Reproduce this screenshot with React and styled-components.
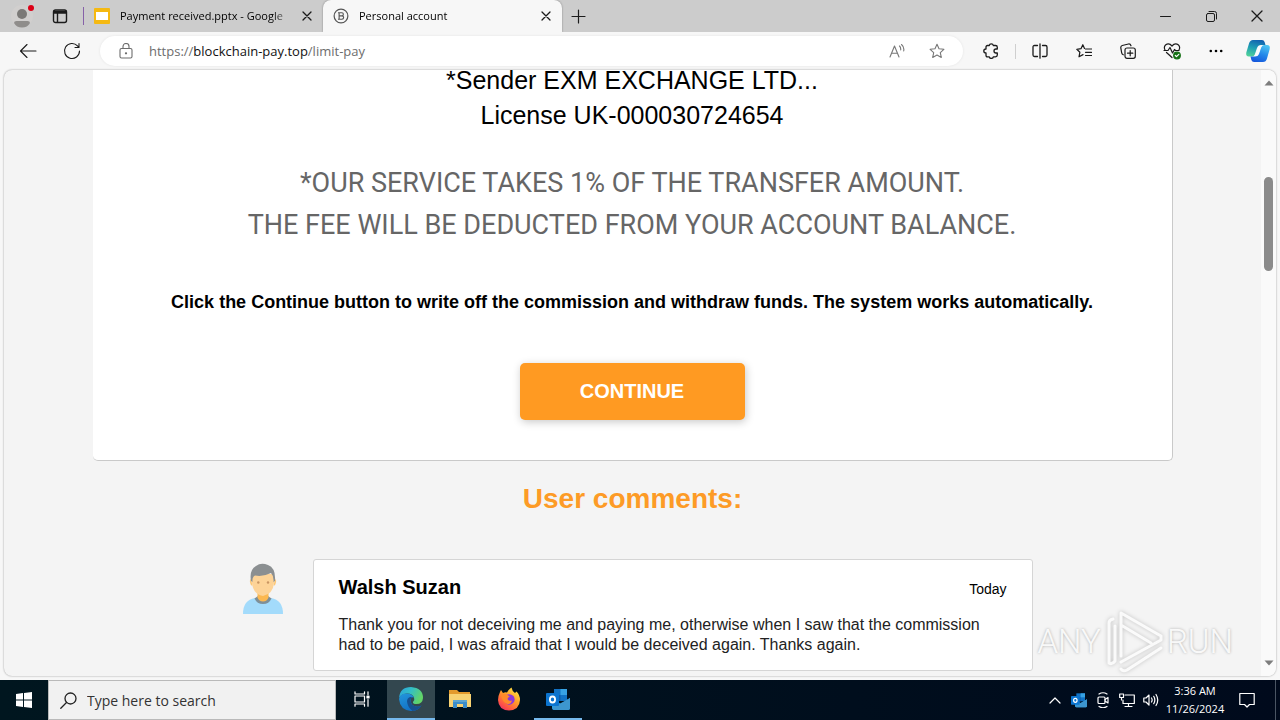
import React from 'react';
import styled, { createGlobalStyle } from 'styled-components';

const GlobalStyle = createGlobalStyle`
    * {
        box-sizing: border-box;
    }
    body {
        margin: 0;
        background-color: #f7f7f7;
        font-family: "Open Sans", "Noto Sans", sans-serif;
    }
    button, input {
        font-family: inherit;
    }
`;

const Screen = styled.div`
    display: flex;
    flex-direction: column;
    height: 100vh;
    overflow: hidden;
`;

const TabStrip = styled.header`
    display: flex;
    flex: none;
    height: 32px;
    background-color: #cccccc;
`;
const IconButton = styled.button`
    display: flex;
    flex: none;
    align-items: center;
    justify-content: center;
    width: ${props => props.$width || 44}px;
    padding: 0;
    border: none;
    background: none;
    color: ${props => props.$color || '#1b1b1b'};
`;
const StripDivider = styled.span`
    width: 1px;
    height: 18px;
    margin: 7px 0 7px 7px;
    background-color: #8661a8;
`;
const Tab = styled.div`
    display: flex;
    align-items: center;
    width: 239px;
    padding: 0 2px 0 10px;
    border-radius: ${props => (props.$active ? '8px 8px 0 0' : '0 0 8px 0')};
    background-color: ${props => (props.$active ? '#f7f7f7' : '#cccccc')};
    box-shadow: ${props => (props.$active ? '0 0 2px rgba(0, 0, 0, .4)' : 'none')};
`;
const TabTitle = styled.span`
    flex: 1;
    margin-left: 10px;
    overflow: hidden;
    font-size: 11px;
    line-height: 16px;
    white-space: nowrap;
    color: #000;
    mask-image: linear-gradient(to right, #000 88%, transparent);
`;
const WindowControls = styled.div`
    display: flex;
    margin-left: auto;
`;

const Toolbar = styled.nav`
    display: flex;
    flex: none;
    align-items: center;
    height: 38px;
    padding: 0 2px 0 6px;
    background-color: #f7f7f7;
`;
const AddressBar = styled.form`
    display: flex;
    flex: 1;
    align-items: center;
    height: 30px;
    margin: 0 6px;
    padding: 0 6px 0 18px;
    border-radius: 15px;
    background-color: #fff;
    box-shadow: 0 0 3px rgba(0, 0, 0, .08);
    color: #6d6d6d;
`;
const Address = styled.a`
    flex: 1;
    margin-left: 15px;
    font-size: 13px;
    line-height: 18px;
    text-decoration: none;
    color: #6d6d6d;
    b {
        font-weight: 400;
        color: #111;
    }
`;
const ToolDivider = styled.span`
    width: 1px;
    height: 15px;
    margin: 0 2px;
    background-color: #cfcfcf;
`;

const Frame = styled.div`
    display: flex;
    flex: 1;
    min-height: 0;
    margin: 0 4px 4px;
    overflow: hidden;
    border-radius: 8px;
    background-color: #f4f4f4;
    box-shadow: 0 0 2px rgba(0, 0, 0, .4);
`;
const Page = styled.main`
    flex: 1;
    overflow: hidden;
    font-family: "Liberation Sans", Arial, sans-serif;
    color: #000;
`;
const ScrollBar = styled.div`
    display: flex;
    flex-direction: column;
    align-items: center;
    width: 15px;
    padding: 10px 0;
    background-color: #fafafa;
    color: #7d7d7d;
`;
const Thumb = styled.div`
    width: 9px;
    height: 94px;
    margin: 91px 0 auto;
    border-radius: 5px;
    background-color: #8b8b8b;
`;

const PaymentCard = styled.section`
    display: flex;
    flex-direction: column;
    align-items: center;
    max-width: 1080px;
    margin: 0 auto;
    padding-bottom: 40px;
    border-right: 1px solid #c9c9c9;
    border-bottom: 1px solid #c9c9c9;
    border-radius: 0 0 5px 5px;
    background-color: #fff;
    text-align: center;
`;
const Sender = styled.p`
    margin: -7px 0 0;
    font-size: 25px;
    line-height: 35px;
`;
const FeeNote = styled.p`
    margin: 29px 0 44px;
    font-family: Roboto, "Open Sans", sans-serif;
    font-size: 27px;
    line-height: 42px;
    color: #666;
`;
const Hint = styled.p`
    margin: 0 0 48px;
    font-size: 18px;
    font-weight: 700;
    line-height: 25px;
`;
const ContinueButton = styled.button`
    width: 225px;
    height: 57px;
    border: none;
    border-radius: 5px;
    background-color: #ff9a22;
    box-shadow: 1px 2px 8px rgba(0, 0, 0, .22);
    font-size: 20px;
    font-weight: 700;
    color: #fff;
`;
const CommentsTitle = styled.h2`
    margin: 21px 0 43px;
    font-size: 28px;
    line-height: 34px;
    text-align: center;
    color: #fd9b26;
`;
const Comment = styled.article`
    display: flex;
    gap: 20px;
    max-width: 800px;
    margin: 0 auto;
`;
const AvatarBox = styled.div`
    display: flex;
    justify-content: center;
    width: 60px;
    padding-top: 4px;
`;
const CommentBody = styled.div`
    flex: 1;
    padding: 15px 25px;
    border: 1px solid #d5d5d5;
    border-radius: 3px;
    background-color: #fff;
`;
const CommentHead = styled.div`
    display: flex;
    align-items: baseline;
    justify-content: space-between;
    margin-bottom: 14px;
    font-size: 14px;
    line-height: 24px;
    h3 {
        margin: 0;
        font-size: 20px;
    }
`;
const CommentText = styled.p`
    margin: 0;
    font-size: 16px;
    line-height: 20px;
    color: #222;
`;

const Watermark = styled.div`
    position: absolute;
    right: 47px;
    bottom: 46px;
    display: flex;
    align-items: center;
    gap: 3px;
    font-family: Roboto, "Liberation Sans", sans-serif;
    font-size: 33px;
    font-weight: 300;
    line-height: 64px;
    color: rgba(255, 255, 255, .9);
    text-shadow: 0 0 3px rgba(0, 0, 0, .3);
    pointer-events: none;
    svg {
        filter: drop-shadow(0 0 2px rgba(0, 0, 0, .25));
    }
`;

const Taskbar = styled.footer`
    display: flex;
    flex: none;
    height: 40px;
    background: linear-gradient(to right, #00161f, #000a1c);
    color: #fff;
`;
const SearchBox = styled.label`
    display: flex;
    align-items: center;
    width: 288px;
    padding-left: 11px;
    border: 1px solid #b9b9b9;
    background-color: #f1f1f1;
    color: #222;
`;
const SearchInput = styled.input`
    flex: 1;
    min-width: 0;
    margin-left: 10px;
    padding: 0;
    border: none;
    outline: none;
    background: none;
    font-size: 14px;
    &::placeholder {
        opacity: 1;
        color: #333;
    }
`;
const TaskButtons = styled.div`
    display: flex;
    gap: 1px;
    margin-left: 2px;
`;
const TaskButton = styled(IconButton)`
    border-bottom: 2px solid ${props => (props.$open ? '#76b9ed' : 'transparent')};
    background-color: ${props => (props.$active ? '#33474f' : 'transparent')};
`;
const Tray = styled.div`
    display: flex;
    align-items: stretch;
    margin-left: auto;
`;
const Clock = styled.time`
    width: 64px;
    padding-top: 2px;
    font-size: 11px;
    line-height: 18px;
    text-align: center;
    white-space: nowrap;
`;
const ShowDesktop = styled.button`
    width: 5px;
    margin-left: 8px;
    padding: 0;
    border: none;
    border-left: 1px solid #4a5563;
    background: none;
`;

const Line = ({ size = 16, width = 1.1, children }) => (
    <svg
        width={size}
        height={size}
        viewBox={`0 0 ${size} ${size}`}
        fill='none'
        stroke='currentColor'
        strokeWidth={width}
        strokeLinecap='round'
        strokeLinejoin='round'
        aria-hidden='true'
    >
        {children}
    </svg>
);

const CloseIcon = ({ size = 10 }) => (
    <Line size={size} width={1.3}>
        <path d={`M1 1L${size - 1} ${size - 1}M${size - 1} 1L1 ${size - 1}`} />
    </Line>
);
const ProfileIcon = () => (
    <svg width='24' height='28' viewBox='0 0 24 28' aria-hidden='true'>
        <circle cx='12' cy='14' r='11' fill='#d1cfce' />
        <circle cx='12' cy='12' r='5' fill='#7b7977' />
        <path d='M4 21Q4 19 6.500 19H17.500Q20 19 20 21Q17.500 25.500 12 25.500Q6.500 25.500 4 21Z' fill='#8f8d8b' />
        <circle cx='21' cy='6' r='3' fill='#dc0016' />
    </svg>
);
const StarPath = 'M8 1.300L10 5.700L14.900 6.300L11.300 9.600L12.300 14.400L8 12L3.700 14.400L4.700 9.600L1.100 6.300L6 5.700Z';

const CopilotIcon = () => (
    <svg width='26' height='24' viewBox='0 0 26 24' aria-hidden='true'>
        <defs>
            <linearGradient id='cpA' x1='.6' y1='0' x2='.3' y2='1'>
                <stop offset='0' stopColor='#1262b0' />
                <stop offset='.5' stopColor='#1f9fb4' />
                <stop offset='1' stopColor='#4fd09a' />
            </linearGradient>
            <linearGradient id='cpB' x1='.7' y1='0' x2='.3' y2='1'>
                <stop offset='0' stopColor='#4cc3f2' />
                <stop offset='.5' stopColor='#2489ea' />
                <stop offset='1' stopColor='#1557dc' />
            </linearGradient>
        </defs>
        <path d='M8 1H17Q19 1 19.600 3L20.500 6H16Q13 6 12 9L9.800 15.500Q9 17.500 7 17.500H4Q.5 17.500 1.300 13.500L4 4.500Q5 1 8 1Z' fill='url(#cpA)' />
        <path d='M18 23H9Q7 23 6.400 21L5.500 17.500H10Q13 17.500 14 15L16.200 8.500Q17 6 19 6H22Q25.500 6 24.700 10L22 19.500Q21 23 18 23Z' fill='url(#cpB)' />
        <path d='M13.600 7.300Q14.600 6.600 16.700 6.700Q16 7.500 15.300 9.500L13.300 15.300Q12.700 16.800 9.700 16.900Q10.300 16 11 14Z' fill='#f7fbff' />
    </svg>
);

const Avatar = () => (
    <svg width='40' height='51' viewBox='0 0 40 51' aria-hidden='true'>
        <path d='M0 51Q0 37 12 35H28Q40 37 40 51Z' fill='#a3dbfb' />
        <path d='M11.500 35.500L15 33H25L28.500 35.500Q26 41 20 41Q14 41 11.500 35.500Z' fill='#7e8f98' />
        <path d='M14.500 28H25.500V34.500Q24 38.500 20 38.500Q16 38.500 14.500 34.500Z' fill='#fcb850' />
        <path d='M8 16Q6 17 7.500 21Q8 23 9.500 22.500ZM32 16Q34 17 32.500 21Q32 23 30.500 22.500Z' fill='#fdc877' />
        <path d='M9 11H31V20Q30 31 20 33Q10 31 9 20Z' fill='#fdd397' />
        <path d='M8 18Q6 7 13 3Q18 -1 25 2Q33 5 32 18L30.500 19Q31 13 28 10Q20 14 12 12.500Q9 14 9.500 19Z' fill='#8b8f91' />
        <circle cx='15.300' cy='19.500' r='1.200' fill='#c99562' />
        <circle cx='25' cy='19.500' r='1.200' fill='#c99562' />
    </svg>
);

const EdgeIcon = () => (
    <svg width='26' height='26' viewBox='0 0 26 26' aria-hidden='true'>
        <defs>
            <linearGradient id='edA' x1='0' y1='0' x2='1' y2='.4'>
                <stop offset='0' stopColor='#2aa0dc' />
                <stop offset='.5' stopColor='#33bfc6' />
                <stop offset='1' stopColor='#62d468' />
            </linearGradient>
            <linearGradient id='edB' x1='0' y1='0' x2='.5' y2='1'>
                <stop offset='0' stopColor='#2396dc' />
                <stop offset='1' stopColor='#1270c4' />
            </linearGradient>
        </defs>
        <path d='M1 12Q2 1 13 1Q25 2 25 12Q24.500 18 18.500 18Q14.500 18 15 16Q17 14 16 11.500Q14 7 8.500 7.500Q3 8 1 12Z' fill='url(#edA)' />
        <path d='M1 13Q2 7.500 8.500 7.500Q14 7.500 16 11.500Q13 10.500 12.500 14Q12.500 19.500 18 20.500Q21.500 21 23.500 19.500Q20 25 13 25Q2 24 1 13Z' fill='url(#edB)' />
        <path d='M12 11Q9 12 9 15.500Q9.500 21 14.500 24.900Q20.500 24.500 23.500 19.500Q21.500 21 18 20.500Q12.500 19.500 12.500 14Q13 11.500 14.500 11.300Q13 10.700 12 11Z' fill='#17508f' />
    </svg>
);
const FolderIcon = () => (
    <svg width='22' height='20' viewBox='0 0 22 20' aria-hidden='true'>
        <path d='M0 1H8L10 3H21V18H0Z' fill='#e39a2c' />
        <path d='M0 5H22V18H0Z' fill='#f8d272' />
        <path d='M4 19V13Q4 11 6 11H16Q18 11 18 13V19H14V15H8V19Z' fill='#3b8dc9' />
        <path d='M4 11H18V13H4Z' fill='#5ea5cf' />
    </svg>
);
const FirefoxIcon = () => (
    <svg width='24' height='24' viewBox='0 0 24 24' aria-hidden='true'>
        <defs>
            <linearGradient id='fxA' x1='.9' y1='0' x2='.2' y2='1'>
                <stop offset='0' stopColor='#fff04a' />
                <stop offset='.45' stopColor='#ff9f28' />
                <stop offset='.8' stopColor='#ff5545' />
                <stop offset='1' stopColor='#ee2e66' />
            </linearGradient>
        </defs>
        <path d='M3 5L4 3L6 6Q8 5 10 5.500Q12 2 14.500 .5Q15 4 18 6L19.500 4.500Q23 8 23 13Q22.500 23 12 23.500Q1.500 23 1 13Q1 9 3 5Z' fill='url(#fxA)' />
        <path d='M9 8Q13 6 16.500 9Q18.500 12 17 15Q14.500 18.500 11 17.500Q7.500 16 8 12Z' fill='#8b38db' />
        <path d='M4 8Q8 6 11 8.300L13 10Q10.500 10 10.500 12Q11.500 14.500 15 13.500Q14 17.500 10.500 17Q5 15 4 8Z' fill='#ff8b2b' />
    </svg>
);
const OutlookIcon = ({ size = 24 }) => (
    <svg width={size} height={size} viewBox='0 0 24 24' aria-hidden='true'>
        <path d='M8 2H21V14H8Z' fill='#1172c4' />
        <path d='M14.500 2H21V8H14.500Z' fill='#37a2e3' />
        <path d='M8 8H14.500V14H8Z' fill='#0f5ca8' />
        <path d='M6 12L15 17L24 11V21Q24 23 22 23H8Q6 23 6 21Z' fill='#2aa0e5' />
        <path d='M6 21L24 11V21Q24 23 22 23H8Z' fill='#3d96cf' />
        <rect x='0' y='6' width='13' height='13' rx='1' fill='#0b74cf' />
        <ellipse cx='6.500' cy='12.500' rx='2.600' ry='3' fill='none' stroke='#fff' strokeWidth='1.800' />
    </svg>
);

const App = () => {
    return (
        <Screen>
            <GlobalStyle />
            <TabStrip>
                <IconButton $width={44} aria-label='Profile'><ProfileIcon /></IconButton>
                <IconButton $width={32} aria-label='Tab actions'>
                    <Line width={1.4}>
                        <rect x='1.500' y='2' width='13' height='12.500' rx='2' />
                        <path d='M2 3.500H14M2 5H14M5.500 5V14' />
                    </Line>
                </IconButton>
                <StripDivider />
                <Tab>
                    <svg width='16' height='16' viewBox='0 0 16 16' aria-hidden='true'>
                        <rect width='16' height='16' rx='1' fill='#f5b912' />
                        <rect x='2' y='4' width='12' height='8' fill='#fff' />
                    </svg>
                    <TabTitle>Payment received.pptx - Google</TabTitle>
                    <IconButton $width={28} aria-label='Close tab'><CloseIcon /></IconButton>
                </Tab>
                <Tab $active>
                    <svg width='16' height='16' viewBox='0 0 17 17' fill='none' stroke='#555' aria-hidden='true'>
                        <circle cx='8.500' cy='8.500' r='7.300' strokeWidth='1.300' />
                        <path d='M6.500 5V12M6.500 5H9.500Q11 5 11 6.600Q11 8.300 9.500 8.300H6.500M9.500 8.300Q11.300 8.300 11.300 10.200Q11.300 12 9.500 12H6.500M5.300 5H7M5.300 12H7' strokeWidth='1.200' />
                    </svg>
                    <TabTitle>Personal account</TabTitle>
                    <IconButton $width={28} aria-label='Close tab'><CloseIcon /></IconButton>
                </Tab>
                <IconButton $width={32} aria-label='New tab'>
                    <Line size={15} width={1.2}><path d='M7.500 1V14M1 7.500H14' /></Line>
                </IconButton>
                <WindowControls>
                    <IconButton $width={46} aria-label='Minimize'>
                        <Line size={11} width={1}><path d='M.5 5.500H10.500' /></Line>
                    </IconButton>
                    <IconButton $width={46} aria-label='Restore'>
                        <Line size={11} width={1}>
                            <rect x='.5' y='2.500' width='8' height='8' rx='1.500' />
                            <path d='M3 .5H8.500Q10.500 .5 10.500 2.500V8' />
                        </Line>
                    </IconButton>
                    <IconButton $width={46} aria-label='Close'><CloseIcon size={12} /></IconButton>
                </WindowControls>
            </TabStrip>

            <Toolbar>
                <IconButton aria-label='Back'>
                    <Line size={18}><path d='M17 9H1.500M8 2.500L1.500 9L8 15.500' /></Line>
                </IconButton>
                <IconButton aria-label='Refresh'>
                    <Line size={18}>
                        <path d='M16.500 9A7.500 7.500 0 1 1 14.500 3.900L16 5.500M16 1.500V5.500H12' />
                    </Line>
                </IconButton>
                <AddressBar>
                    <Line>
                        <rect x='2' y='5.500' width='12' height='9.500' rx='1.500' />
                        <path d='M5 5.500V3.500A3 3 0 0 1 11 3.500V5.500' />
                        <circle cx='8' cy='10.300' r='.6' fill='currentColor' />
                    </Line>
                    <Address href='#'>https://<b>blockchain-pay.top</b>/limit-pay</Address>
                    <IconButton $width={40} $color='#777' type='button' aria-label='Read aloud'>
                        <Line>
                            <path d='M1 14L5.500 3L10 14M2.600 10.300H8.400M10.500 3Q12 4.500 11.700 7M12.500 1.500Q15.500 4 14.700 8' />
                        </Line>
                    </IconButton>
                    <IconButton $width={40} $color='#777' type='button' aria-label='Add to favorites'>
                        <Line><path d={StarPath} /></Line>
                    </IconButton>
                </AddressBar>
                <IconButton aria-label='Extensions'>
                    <Line width={1.3}>
                        <path d='M4.500 2.500H6.300Q6.500 .8 8.300 .8Q10 .8 10.300 2.500H12.500Q14.300 2.500 14.300 4.300V6H13Q11 6 11 8Q11 10 13 10H14.300V12Q14.300 13.800 12.500 13.800H10.300Q10 15.400 8.300 15.400Q6.500 15.400 6.300 13.800H4.500Q3 13.800 3 12.300V10Q.8 10 .8 8Q.8 6 3 6V4Q3 2.500 4.500 2.500Z' />
                    </Line>
                </IconButton>
                <ToolDivider />
                <IconButton aria-label='Split screen'>
                    <Line width={1.3}>
                        <path d='M5.500 2.500H2.500Q1 2.500 1 4V12Q1 13.500 2.500 13.500H5.500M10.500 2.500H13.500Q15 2.500 15 4V12Q15 13.500 13.500 13.500H10.500M8 .8V15.200' />
                    </Line>
                </IconButton>
                <IconButton aria-label='Favorites'>
                    <Line width={1.2}>
                        <path d='M8.500 5.500L6.800 1.700L5 5.700L.8 6.300L3.900 9.200L3 13.800L7 11.600M9.500 6H15.500M9.500 9.300H15.500M9.500 12.500H15.500' />
                    </Line>
                </IconButton>
                <IconButton aria-label='Collections'>
                    <Line width={1.2}>
                        <rect x='5' y='5' width='10.300' height='10.300' rx='2' />
                        <path d='M10.200 7.500V12.800M7.500 10.200H12.800M3.300 11.800Q2 11.300 1.700 9.800L.8 4.800Q.6 3 2.200 2.500L8.500 1Q10.300 .7 11 2.800' />
                    </Line>
                </IconButton>
                <IconButton aria-label='Browser essentials'>
                    <Line size={18} width={1.2}>
                        <path d='M2 8Q.5 5 2.500 3Q6 .5 9 4Q12 .5 15.500 3Q17.500 5 16 8M1 8.500H5L7 5.500L9.500 11L11.500 7.500L12.500 8.500H16M3.500 10.500L9 15.500' />
                        <circle cx='14' cy='13.500' r='3.300' fill='#157015' stroke='#157015' />
                        <path d='M12.300 13.500L13.500 14.700L15.800 12.300' stroke='#fff' />
                    </Line>
                </IconButton>
                <IconButton aria-label='Settings and more'>
                    <svg width='14' height='4' viewBox='0 0 14 4' aria-hidden='true'>
                        <circle cx='1.800' cy='2' r='1.300' />
                        <circle cx='7' cy='2' r='1.300' />
                        <circle cx='12.200' cy='2' r='1.300' />
                    </svg>
                </IconButton>
                <IconButton $width={40} aria-label='Copilot'><CopilotIcon /></IconButton>
            </Toolbar>

            <Frame>
                <Page>
                    <PaymentCard>
                        <Sender>
                            *Sender EXM EXCHANGE LTD...<br />
                            License UK-000030724654
                        </Sender>
                        <FeeNote>
                            *OUR SERVICE TAKES 1% OF THE TRANSFER AMOUNT.<br />
                            THE FEE WILL BE DEDUCTED FROM YOUR ACCOUNT BALANCE.
                        </FeeNote>
                        <Hint>
                            Click the Continue button to write off the commission and withdraw funds. The system works automatically.
                        </Hint>
                        <ContinueButton type='button'>CONTINUE</ContinueButton>
                    </PaymentCard>
                    <CommentsTitle>User comments:</CommentsTitle>
                    <Comment>
                        <AvatarBox><Avatar /></AvatarBox>
                        <CommentBody>
                            <CommentHead>
                                <h3>Walsh Suzan</h3>
                                <span>Today</span>
                            </CommentHead>
                            <CommentText>
                                Thank you for not deceiving me and paying me, otherwise when I saw that the commission had to be paid, I was afraid that I would be deceived again. Thanks again.
                            </CommentText>
                        </CommentBody>
                    </Comment>
                </Page>
                <ScrollBar>
                    <svg width='10' height='6' viewBox='0 0 10 6' fill='currentColor' aria-hidden='true'>
                        <path d='M5 .5L9.500 5.500H.5Z' />
                    </svg>
                    <Thumb />
                    <svg width='10' height='6' viewBox='0 0 10 6' fill='currentColor' aria-hidden='true'>
                        <path d='M5 5.500L9.500 .5H.5Z' />
                    </svg>
                </ScrollBar>
            </Frame>

            <Watermark>
                ANY
                <svg width='60' height='64' viewBox='0 0 60 64' fill='none' stroke='#fff' strokeWidth='3' strokeOpacity='.85' strokeLinejoin='round' strokeLinecap='round' aria-hidden='true'>
                    <path d='M17 46V3L57 26M17 15L47 33M57 26V30L17 52M5 53V13Q5 10 9 9M5 53Q8 55 11 51V16M17 59Q19 62 23 60L57 38' />
                </svg>
                RUN
            </Watermark>

            <Taskbar>
                <IconButton $width={48} $color='#fff' aria-label='Start'>
                    <svg width='16' height='16' viewBox='0 0 16 16' fill='currentColor' aria-hidden='true'>
                        <path d='M0 2L7 1V7.500H0ZM8 .9L16 0V7.500H8ZM0 8.500H7V15L0 14ZM8 8.500H16V16L8 15.100Z' />
                    </svg>
                </IconButton>
                <SearchBox htmlFor='search'>
                    <Line size={17} width={1.3}>
                        <circle cx='10.500' cy='6.500' r='5.500' />
                        <path d='M6.500 10.500L.8 16.200' />
                    </Line>
                    <SearchInput id='search' type='text' placeholder='Type here to search' aria-label='Type here to search' />
                </SearchBox>
                <TaskButtons>
                    <TaskButton $width={48} $color='#fff' aria-label='Task view'>
                        <Line width={1.2}>
                            <path d='M1 .8V3H10.500V.8M1 15.200V13H10.500V15.200M14 .8V3.500M14 8.500V15.200' />
                            <rect x='1' y='5' width='9.500' height='6' />
                            <rect x='13' y='5' width='2' height='2' fill='currentColor' />
                        </Line>
                    </TaskButton>
                    <TaskButton $width={48} $open $active aria-label='Microsoft Edge'><EdgeIcon /></TaskButton>
                    <TaskButton $width={48} aria-label='File Explorer'><FolderIcon /></TaskButton>
                    <TaskButton $width={48} aria-label='Firefox'><FirefoxIcon /></TaskButton>
                    <TaskButton $width={48} $open aria-label='Outlook'><OutlookIcon /></TaskButton>
                </TaskButtons>
                <Tray>
                    <IconButton $width={24} $color='#fff' aria-label='Show hidden icons'>
                        <Line size={12} width={1.2}><path d='M1 9L6 4L11 9' /></Line>
                    </IconButton>
                    <IconButton $width={24} aria-label='Outlook'><OutlookIcon size={16} /></IconButton>
                    <IconButton $width={24} $color='#fff' aria-label='Meet now'>
                        <Line width={1.2}>
                            <rect x='3' y='5' width='7' height='6.500' rx='1' />
                            <path d='M10 7.500L13 5.500V11L10 9M4 2Q8 -.5 12 2M4 14.500Q8 17 12 14.500' />
                        </Line>
                    </IconButton>
                    <IconButton $width={24} $color='#fff' aria-label='Network'>
                        <Line width={1.2}>
                            <path d='M6 3H15.300V11.500H4V8M9.500 11.500V14.500M6 14.500H13M2.500 5.500V8' />
                            <rect x='.7' y='2' width='3.800' height='3.500' />
                        </Line>
                    </IconButton>
                    <IconButton $width={24} $color='#fff' aria-label='Volume'>
                        <Line width={1.2}>
                            <path d='M.8 6V10H3L6 13V3L3 6ZM8.500 6Q9.800 8 8.500 10M10.700 4.300Q13 8 10.700 11.700M13 2.500Q16.500 8 13 13.500' />
                        </Line>
                    </IconButton>
                    <Clock>3:36 AM<br />11/26/2024</Clock>
                    <IconButton $width={40} $color='#fff' aria-label='Notifications'>
                        <Line width={1.2}><path d='M.8 1.500H15.200V12.500H10.500L8 15L5.500 12.500H.8Z' /></Line>
                    </IconButton>
                    <ShowDesktop aria-label='Show desktop' />
                </Tray>
            </Taskbar>
        </Screen>
    );
};

export default App;
